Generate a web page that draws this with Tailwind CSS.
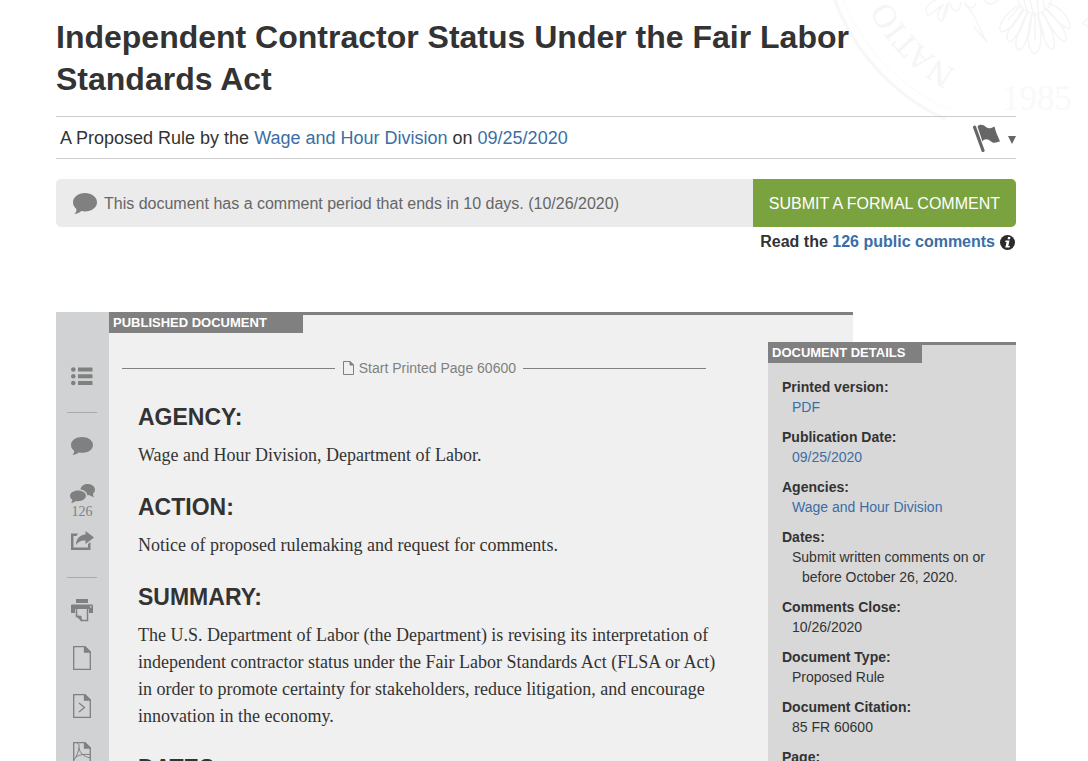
<!DOCTYPE html>
<html lang="en">
<head>
    <meta charset="UTF-8">
    <meta name="viewport" content="width=device-width, initial-scale=1">
    <title>Independent Contractor Status Under the Fair Labor Standards Act</title>
    <script src="https://cdn.jsdelivr.net/npm/@tailwindcss/browser@4"></script>
</head>
<body class="relative min-h-screen overflow-x-hidden bg-white font-['Liberation_Sans',Arial,sans-serif] text-[#333]">

    <!-- seal watermark -->
    <svg class="absolute top-0 right-0 -z-10" width="268" height="130" viewBox="820 0 268 130" fill="none" stroke="#f7f7f7" aria-hidden="true">
        <defs><path id="ring" d="M1035 90A165 165 0 0 1 870 -75"/></defs>
        <path d="M832 -8A214 214 0 0 0 945 119" stroke-width="3"/>
        <path d="M843 0A205 205 0 0 0 950 110" stroke="#fafafa"/>
        <text fill="#f5f5f5" stroke="none" font-family="Liberation Serif, serif" font-size="33"><textPath href="#ring" startOffset="82">NATIO</textPath></text>
        <text x="1002" y="110" fill="#f9f9f9" stroke="none" font-family="Liberation Serif, serif" font-size="35">1985</text>
        <g stroke="#f5f5f5" stroke-width="1.500">
            <path d="M1018 6C1004 14 996 28 1002 32C1010 31 1018 18 1024 10C1010 26 1002 38 1010 42C1018 38 1024 20 1028 12C1016 34 1012 49 1020 50C1028 44 1030 24 1032 14C1026 34 1027 51 1035 54C1043 50 1042 28 1037 14C1042 32 1046 51 1053 49C1058 40 1048 22 1042 12C1052 28 1060 44 1066 41C1069 32 1054 16 1045 8C1056 20 1067 32 1070 27C1070 16 1058 6 1048 3"/>
            <path d="M1020 6L1008 20M1022 10L1012 28M1027 12L1020 32M1032 14L1029 36M1035 14V40M1038 14L1044 36M1042 12L1053 32M1046 8L1060 24"/>
            <path d="M1018 0C1022 16 1046 20 1052 0M1024 0L1028 14M1030 0L1034 16M1037 0L1039 15M1043 0L1045 10"/>
            <path d="M936 0C926 4 924 10 928 16L944 4C936 12 936 19 942 21C947 15 948 8 948 2M950 2C952 14 960 14 961 2M928 16L942 5M942 21L947 4M964 2Q972 13 976 3M965 5C976 12 978 30 987 42M974 26C978 34 983 36 987 42"/>
            <path d="M984 0Q990 8 998 0M1088 18l-5 5 5 4"/>
        </g>
    </svg>

    <main class="pr-[72px] pl-14">
        <header>
            <h1 class="pt-4 pb-4 text-[32px] leading-[42px] font-bold">Independent Contractor Status Under the Fair Labor<br>Standards Act</h1>
            <div class="flex h-[43px] items-center justify-between border-y border-[#ccc] pl-1 text-lg">
                <p>A Proposed Rule by the <a href="#" class="text-[#3a6ea5]">Wage and Hour Division</a> on <a href="#" class="text-[#3a6ea5]">09/25/2020</a></p>
                <button type="button" class="flex items-center gap-2" aria-label="Flag document">
                    <svg width="27" height="28" viewBox="0 0 27 28" fill="#666">
                        <path d="M0 3.500a1.600 1.600 0 0 1 3-1L11.500 26a1.500 1.500 0 0 1-3 1z"/>
                        <path d="M4.500 2.500C6 0 10 0 13 3c2.500 2 5 1.500 8.500-.500 1 5 3 9 5.500 15-3 .500-6 2.500-9 0-3-3-7-3-8.500 0z"/>
                    </svg>
                    <svg class="mt-1" width="8" height="8" viewBox="0 0 8 8" fill="#666"><path d="M0 0h8L4 8z"/></svg>
                </button>
            </div>
        </header>

        <section class="mt-5">
            <div class="flex h-12 overflow-hidden rounded-[5px] bg-[#ebebeb]">
                <p class="flex flex-1 items-center gap-[7px] pl-[17px] text-base text-[#666]">
                    <svg width="24" height="21" viewBox="0 0 24 21" fill="#808080"><path d="M12 0c6.600 0 12 4 12 9.200s-5.400 9.300-12 9.300c-1.300 0-2.500-.2-3.700-.5C6.500 20 4 20.700 1.500 20.900 3 19.400 3.500 18 3.400 16 1.200 14.200 0 12 0 9.200 0 4 5.400 0 12 0z"/></svg>
                    <span class="pt-px">This document has a comment period that ends in 10 days. (10/26/2020)</span>
                </p>
                <button type="button" class="bg-[#7aa23f] px-4 pt-px text-base text-white">SUBMIT A FORMAL COMMENT</button>
            </div>
            <p class="mt-[3px] flex items-center justify-end gap-[5px] pr-px text-base font-bold">
                <span>Read the <a href="#" class="text-[#3a6ea5]">126 public comments</a></span>
                <svg width="15" height="15" viewBox="0 0 15 15"><circle cx="7.500" cy="7.500" r="7.500" fill="#2b2b2b"/><path d="M8 2h2.400L10 4.200H7.600zM5.500 5.600h4L8.300 11H10l-.4 1.600H5.300L6.600 7H5.200z" fill="#fff"/></svg>
            </p>
        </section>

        <div class="mt-[58px] flex items-stretch">
            <nav class="flex w-[53px] shrink-0 flex-col items-center bg-[#d0d2d3] pt-[55px] pr-px text-[#808080]" aria-label="Document tools">
                <button type="button" aria-label="Table of contents">
                    <svg width="22" height="19" viewBox="0 0 22 19" fill="currentColor"><circle cx="2.300" cy="2.500" r="2.300"/><circle cx="2.300" cy="9.300" r="2.300"/><circle cx="2.300" cy="16" r="2.300"/><path d="M7 .5h14q.5 0 .5.500v3q0 .500-.5.500H7zM7 7.300h14q.5 0 .5.500v3q0 .500-.5.500H7zM7 14h14q.5 0 .5.500v3q0 .500-.5.500H7z"/></svg>
                </button>
                <hr class="mt-[26px] w-[30px] border-[#aaa]">
                <button type="button" class="mt-6" aria-label="Comment">
                    <svg width="22" height="18" viewBox="0 0 24 21" preserveAspectRatio="none" fill="currentColor"><path d="M12 0c6.600 0 12 4 12 9.200s-5.400 9.300-12 9.300c-1.300 0-2.500-.2-3.700-.5C6.500 20 4 20.700 1.500 20.900 3 19.400 3.500 18 3.400 16 1.200 14.200 0 12 0 9.200 0 4 5.400 0 12 0z"/></svg>
                </button>
                <button type="button" class="mt-[29px] flex flex-col items-center" aria-label="Public comments">
                    <svg width="25" height="19" viewBox="0 0 25 19" fill="currentColor"><path d="M17.500 0C22 0 25 2.500 25 5.500c0 1.800-.8 3.200-2 4.200 0 1.300.3 2.300 1.200 3.300-2-.2-3.600-1-4.800-2-.8.200-1.400.3-2 .3C17 8 13.500 5.800 10.500 5.600 10.600 2.500 13.500 0 17.500 0z"/><path d="M8 6.500c4.500 0 8 2.300 8 5.300s-3.500 5.400-8 5.400c-.8 0-1.600-.1-2.300-.2C4.400 18.200 2.800 18.900 1 19c.9-1 1.300-2 1.300-3.200C.8 14.800 0 13.400 0 11.800c0-3 3.500-5.300 8-5.300z"/></svg>
                    <span class="pt-px font-['Liberation_Serif',serif] text-sm leading-4">126</span>
                </button>
                <button type="button" class="mt-[11px]" aria-label="Share">
                    <svg width="23" height="19" viewBox="0 0 23 19" fill="currentColor"><path d="M0 2.500h7L5.500 5H2.500v11.500H17V13l2.500-2v8H0z"/><path d="M14.500 0L23 6.500 14.500 13V9.500C10 9 7.500 10.500 5 14c0-6 3.500-10 9.500-10.500z"/></svg>
                </button>
                <hr class="mt-[27px] w-[30px] border-[#aaa]">
                <button type="button" class="mt-[21px]" aria-label="Print">
                    <svg width="22" height="23" viewBox="0 0 22 23" fill="currentColor"><path d="M5 0h12v4H5z"/><path fill-rule="evenodd" d="M1 5.500h20q1 0 1 1V14h-4V10H4v4H0V6.500q0-1 1-1zM19 7v1.500h1.500V7z"/><path d="M5.500 10v7.500h3.500l1.500 4h6V10" fill="none" stroke="currentColor" stroke-width="1.500"/><path d="M4.500 16.500l6 6V17z"/></svg>
                </button>
                <button type="button" class="mt-6" aria-label="Document">
                    <svg width="18" height="24" viewBox="0 0 18 24" fill="none" stroke="currentColor" stroke-width="1.300"><path d="M.7.7h11.300l5.300 5.300v17.300H.7z"/><path d="M11.500.7v5.300h5.800z" fill="currentColor"/></svg>
                </button>
                <button type="button" class="mt-6" aria-label="Document source">
                    <svg width="18" height="24" viewBox="0 0 18 24" fill="none" stroke="currentColor" stroke-width="1.300"><path d="M.7.7h11.300l5.300 5.300v17.300H.7z"/><path d="M11.500.7v5.300h5.800z" fill="currentColor"/><path d="M6 9l5.500 4.500L6 18"/></svg>
                </button>
                <button type="button" class="mt-6" aria-label="PDF">
                    <svg width="18" height="24" viewBox="0 0 18 24" fill="none" stroke="currentColor" stroke-width="1.300"><path d="M.7.7h11.300l5.300 5.300v17.300H.7z"/><path d="M11.500.7v5.300h5.800z" fill="currentColor"/><path stroke-width="1" d="M4 2c1-1 2.500 0 2 3-.3 4-2 9-5 13M6 6c1 5 4 8 11 10M3 15c3-2.500 8-3 14-2.500"/></svg>
                </button>
            </nav>

            <article class="mr-[163px] min-w-0 flex-1 border-t-[3px] border-[#808080] bg-[#f0f0f0] pb-10">
                <h2 class="h-[18px] w-[194px] bg-[#808080] pl-1 text-[13px] leading-[15px] font-bold text-white">PUBLISHED DOCUMENT</h2>
                <div class="mt-[25px] mr-[147px] ml-[13px] flex items-center text-sm text-[#808080]">
                    <span class="h-px flex-1 bg-[#808080]"></span>
                    <svg class="mr-[5px] ml-2" width="11" height="14" viewBox="0 0 11 14" fill="none" stroke="currentColor"><path d="M.5.500h6.500l3.500 3.500v9.500H.5z"/><path d="M7 .5v3.500h3.500z" fill="currentColor"/></svg>
                    <span class="mr-[7px]">Start Printed Page 60600</span>
                    <span class="h-px w-[183px] bg-[#808080]"></span>
                </div>
                <div class="mr-[130px] ml-[29px] font-['Liberation_Serif',serif] text-lg leading-[27px]">
                    <h3 class="mt-6 font-['Liberation_Sans',Arial,sans-serif] text-[23px] leading-[30px] font-bold">AGENCY:</h3>
                    <p class="mt-[10px]">Wage and Hour Division, Department of Labor.</p>
                    <h3 class="mt-[23px] font-['Liberation_Sans',Arial,sans-serif] text-[23px] leading-[30px] font-bold">ACTION:</h3>
                    <p class="mt-[10px]">Notice of proposed rulemaking and request for comments.</p>
                    <h3 class="mt-[23px] font-['Liberation_Sans',Arial,sans-serif] text-[23px] leading-[30px] font-bold">SUMMARY:</h3>
                    <p class="mt-[10px]">The U.S. Department of Labor (the Department) is revising its interpretation of<br>independent contractor status under the Fair Labor Standards Act (FLSA or Act)<br>in order to promote certainty for stakeholders, reduce litigation, and encourage<br>innovation in the economy.</p>
                    <h3 class="mt-[23px] font-['Liberation_Sans',Arial,sans-serif] text-[23px] leading-[30px] font-bold">DATES:</h3>
                </div>
            </article>

            <aside class="z-10 mt-[30px] -ml-[248px] w-[248px] shrink-0 border-t-[3px] border-[#808080] bg-[#d8d8d8] text-sm leading-5">
                <h2 class="h-[18px] w-[154px] bg-[#808080] pl-1 text-[13px] leading-[15px] font-bold text-white">DOCUMENT DETAILS</h2>
                <dl class="flex flex-col gap-[10px] pt-[14px] pr-5 pl-[14px]">
                    <div><dt class="font-bold">Printed version:</dt><dd class="pl-[10px]"><a href="#" class="text-[#3a6ea5]">PDF</a></dd></div>
                    <div><dt class="font-bold">Publication Date:</dt><dd class="pl-[10px]"><a href="#" class="text-[#3a6ea5]">09/25/2020</a></dd></div>
                    <div><dt class="font-bold">Agencies:</dt><dd class="pl-[10px]"><a href="#" class="text-[#3a6ea5]">Wage and Hour Division</a></dd></div>
                    <div><dt class="font-bold">Dates:</dt><dd class="pl-5 -indent-[10px]">Submit written comments on or before October 26, 2020.</dd></div>
                    <div><dt class="font-bold">Comments Close:</dt><dd class="pl-[10px]">10/26/2020</dd></div>
                    <div><dt class="font-bold">Document Type:</dt><dd class="pl-[10px]">Proposed Rule</dd></div>
                    <div><dt class="font-bold">Document Citation:</dt><dd class="pl-[10px]">85 FR 60600</dd></div>
                    <div><dt class="font-bold">Page:</dt><dd class="pl-[10px]">60600-60639</dd></div>
                </dl>
            </aside>
        </div>
    </main>
</body>
</html>
